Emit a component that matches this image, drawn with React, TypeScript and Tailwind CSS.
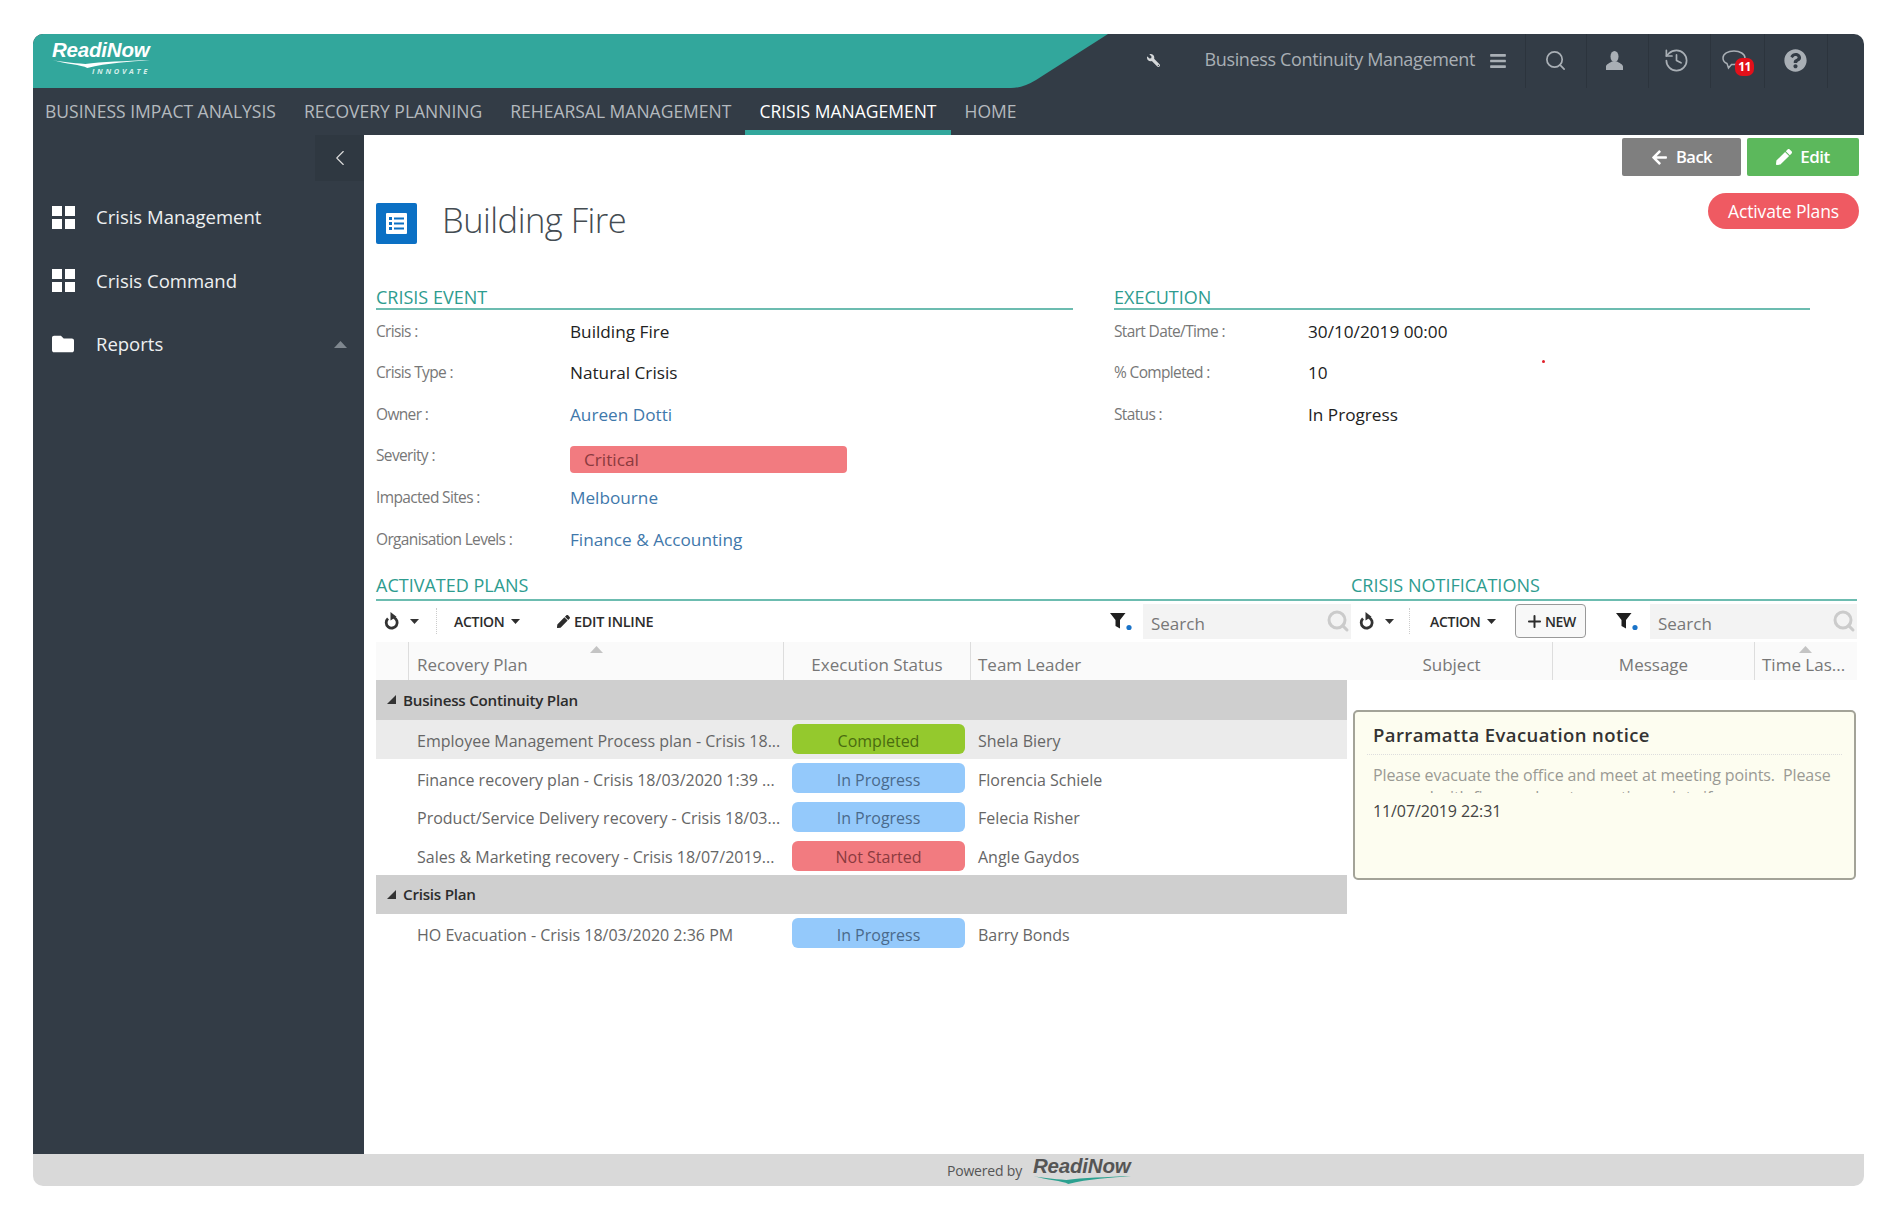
import { ChevronLeft, History, Plus, Search } from "lucide-react";
import { FaArrowLeft, FaBars, FaFolder, FaPen, FaQuestionCircle, FaWrench } from "react-icons/fa";

const font = "font-['Open_Sans','Liberation_Sans',sans-serif]";

function GridIcon() {
  return (
    <svg width="23" height="23" viewBox="0 0 23 23" fill="#fff" className="shrink-0">
      <rect x="0" y="0" width="10" height="10" />
      <rect x="13" y="0" width="10" height="10" />
      <rect x="0" y="13" width="10" height="10" />
      <rect x="13" y="13" width="10" height="10" />
    </svg>
  );
}

function Caret({ className = "" }: { className?: string }) {
  return (
    <svg width="9" height="5" viewBox="0 0 9 5" className={className} fill="currentColor">
      <path d="M0 0h9L4.5 5z" />
    </svg>
  );
}

function UpCaret({ className = "" }: { className?: string }) {
  return (
    <svg width="13" height="7" viewBox="0 0 13 7" className={className} fill="currentColor">
      <path d="M0 7h13L6.500 0z" />
    </svg>
  );
}

function FilterIcon() {
  return (
    <svg width="22" height="20" viewBox="0 0 22 20" className="shrink-0">
      <path d="M0 2h15.500L10 9v8.500l-4.500-2.500V9z" fill="#1f1f1f" />
      <circle cx="19" cy="16.500" r="2.600" fill="#1a73c8" />
    </svg>
  );
}

function RefreshIcon() {
  return (
    <svg width="16" height="18" viewBox="0 0 16 18" className="shrink-0">
      <path d="M9.800 5.500A5.500 5.500 0 1 1 4 6.500" fill="none" stroke="#333" strokeWidth="2.800" />
      <path d="M6.500 0l6 4.800-6 3.700z" fill="#333" />
    </svg>
  );
}

function UserIcon() {
  return (
    <svg width="17" height="19" viewBox="0 0 17 19" fill="currentColor">
      <ellipse cx="8.500" cy="5.500" rx="4" ry="5.500" />
      <path d="M0 19v-3.500C0 13 4 12 6 10.500h5C13 12 17 13 17 15.500V19z" />
    </svg>
  );
}

function ChatIcon() {
  return (
    <svg width="24" height="20" viewBox="0 0 24 20" fill="none" stroke="currentColor" strokeWidth="1.500">
      <path d="M12 1C6 1 1 3.500 1 8c0 2.500 1.500 4.500 4 5.500L6.500 18l3-3.500H12c6 0 11-2.500 11-6.500S18 1 12 1z" />
    </svg>
  );
}

function Logo({ dark }: { dark?: boolean }) {
  return (
    <div className="flex flex-col items-start">
      <span
        className={`font-['Liberation_Sans',sans-serif] text-[20.500px] leading-[22px] font-bold italic tracking-[-0.2px] ${
          dark ? "text-[#555]" : "text-white"
        }`}
      >
        ReadiNow
      </span>
      <svg width="98" height="9" viewBox="0 0 100 9" className="-mt-[1px]">
        <path d="M0 0C14 4 30 5 36 8C56 3 80 2 100 0C76 1 50 2 34 4C20 3 10 2 0 0z" fill={dark ? "#2ba08f" : "#fff"} />
      </svg>
    </div>
  );
}

function Section({ title }: { title: string }) {
  return (
    <div className="h-[26px] border-b-2 border-[#6cbcb0] text-[18px] leading-[27px] text-[#2e9c8f] uppercase">
      {title}
    </div>
  );
}

function Field({ label, children }: { label: string; children: React.ReactNode }) {
  return (
    <div className="flex h-[41.6px] items-center">
      <div className="-mt-[1px] w-[194px] text-[15.500px] tracking-[-0.65px] text-[#777]">{label} :</div>
      <div className="flex-1 text-[17.200px] text-[#222]">{children}</div>
    </div>
  );
}

function Link({ children }: { children: React.ReactNode }) {
  return <span className="text-[#3f78ab]">{children}</span>;
}

const badgeColors: Record<string, string> = {
  Completed: "bg-[#94c92d] text-[#4a6b10]",
  "In Progress": "bg-[#94c9fb] text-[#4a6a8c]",
  "Not Started": "bg-[#f27b80] text-[#8a3a3e]",
};

function PlanRow({
  name,
  status,
  leader,
  selected,
}: {
  name: string;
  status: string;
  leader: string;
  selected?: boolean;
}) {
  return (
    <div className={`flex h-[38.75px] items-center text-[16px] text-[#666] ${selected ? "bg-[#ebebeb]" : ""}`}>
      <div className="w-[402px] pt-[3px] pl-[41px] whitespace-nowrap">{name}</div>
      <div className="pl-[14px]">
        <div className={`flex h-[30px] w-[173px] items-center justify-center rounded-[6px] pt-[3px] ${badgeColors[status]}`}>
          {status}
        </div>
      </div>
      <div className="pt-[3px] pl-[13px]">{leader}</div>
    </div>
  );
}

function GroupRow({ title, className = "" }: { title: string; className?: string }) {
  return (
    <div className={`flex items-center gap-[7px] bg-[#cfcfcf] pl-[11px] text-[15.200px] font-semibold tracking-[-0.25px] text-[#2c2c2c] ${className}`}>
      <svg width="9" height="9" viewBox="0 0 9 9" fill="#333">
        <path d="M9 0v9H0z" />
      </svg>
      {title}
    </div>
  );
}

function SearchBox({ className = "" }: { className?: string }) {
  return (
    <div className={`flex h-[35px] items-center justify-between bg-[#f3f3f3] pr-[1px] pl-[8px] text-[17px] text-[#777] ${className}`}>
      <span className="pt-[4px]">Search</span>
      <Search size={24} strokeWidth={3} className="text-[#cbcbcb]" />
    </div>
  );
}

function Refresh() {
  return (
    <div className="flex items-center gap-[10px] text-[#333]">
      <RefreshIcon />
      <Caret />
    </div>
  );
}

function ActionMenu() {
  return (
    <div className="flex items-center gap-[6px] text-[14px] font-semibold tracking-[-0.3px] text-[#2c2c2c]">
      ACTION
      <Caret />
    </div>
  );
}

const tabs = ["BUSINESS IMPACT ANALYSIS", "RECOVERY PLANNING", "REHEARSAL MANAGEMENT", "CRISIS MANAGEMENT", "HOME"];

export default function App() {
  return (
    <div className={`relative h-[1222px] bg-white pt-[34px] pr-[39px] pl-[33px] ${font}`}>
      <div className="flex h-[1152px] flex-col overflow-hidden rounded-[10px] bg-white">
        {/* top bars */}
        <div className="relative h-[54px] shrink-0 bg-[#333c46]">
          <svg className="absolute top-0 left-0" width="1080" height="54" viewBox="0 0 1080 54">
            <path d="M0 0H1075L1003 46Q990 54 978 54H0z" fill="#32a79c" />
          </svg>
          <div className="absolute top-[5px] left-[19px]">
            <Logo />
            <div className="-mt-[2px] pl-[40px] text-[7.500px] leading-[8px] font-bold tracking-[2.700px] text-[#d5eeea] italic">INNOVATE</div>
          </div>
          <div className="absolute inset-y-0 right-0 flex items-center text-[#a9afb5]">
            <FaWrench size={13} className="mr-[44px] -mt-[2px] -scale-x-100 text-[#d5d8da]" />
            <span className="mr-[14px] -mt-[4px] text-[18px] tracking-[-0.35px]">Business Continuity Management</span>
            <FaBars size={18} className="mr-[18px]" />
            <div className="flex h-full w-[61px] items-center justify-center border-l border-[#2c343d] pr-[2px] pb-[2px]">
              <Search size={23} strokeWidth={1.800} />
            </div>
            <div className="flex h-full w-[62px] items-center justify-center border-l border-[#2c343d] pr-[6px] pb-[2px]">
              <UserIcon />
            </div>
            <div className="flex h-full w-[62px] items-center justify-center border-l border-[#2c343d] pr-[6px] pb-[2px]">
              <History size={27} strokeWidth={1.500} />
            </div>
            <div className="relative flex h-full w-[54px] items-center justify-center border-l border-[#2c343d] pr-[7px] pb-[2px]">
              <ChatIcon />
              <span className="absolute top-[24px] left-[24px] flex h-[18px] w-[19px] items-center justify-center rounded-[7px] bg-[#e2101a] text-[12px] font-bold tracking-[-0.5px] text-white">
                11
              </span>
            </div>
            <div className="flex h-full w-[64px] items-center justify-center border-x border-[#2c343d] pr-[2px] pb-[2px]">
              <FaQuestionCircle size={23} />
            </div>
            <div className="w-[36px]" />
          </div>
        </div>
        <div className="flex h-[47px] shrink-0 items-stretch bg-[#333c46]">
          {tabs.map((t) => (
            <div
              key={t}
              className={`flex items-center border-b-[5px] pt-[5px] pr-[14px] text-[17.500px] ${
                t === "CRISIS MANAGEMENT" ? "border-[#32a79c] text-white" : "border-transparent text-[#b4b9be]"
              } ${t === "BUSINESS IMPACT ANALYSIS" ? "pl-[12px]" : "pl-[14px]"}`}
            >
              {t}
            </div>
          ))}
        </div>

        <div className="flex min-h-0 flex-1">
          {/* sidebar */}
          <aside className="w-[331px] shrink-0 bg-[#333c46] text-white">
            <div className="flex justify-end">
              <div className="flex h-[46px] w-[49px] items-center justify-center bg-[#2f3841] text-[#ddd]">
                <ChevronLeft size={26} strokeWidth={1} />
              </div>
            </div>
            <div className="flex flex-col pt-[4px] pl-[19px] text-[18.500px] text-[#eef0f1]">
              <div className="flex h-[64px] items-center gap-[21px]">
                <GridIcon />
                Crisis Management
              </div>
              <div className="flex h-[63px] items-center gap-[21px]">
                <GridIcon />
                Crisis Command
              </div>
              <div className="flex h-[64px] items-center gap-[22px] pr-[17px]">
                <FaFolder size={22} className="shrink-0 text-white" />
                <span className="flex-1">Reports</span>
                <UpCaret className="text-[#7f878f]" />
              </div>
            </div>
          </aside>

          {/* main */}
          <main className="flex min-w-0 flex-1 flex-col pr-[5px] pl-[12px]">
            <div className="flex justify-end gap-[6px] pt-[3px]">
              <div className="flex h-[38px] w-[119px] items-center justify-center gap-[8px] rounded-[2px] bg-[#7f7f7f] text-[16.500px] font-semibold tracking-[-0.5px] text-white">
                <FaArrowLeft size={17} />
                Back
              </div>
              <div className="flex h-[38px] w-[112px] items-center justify-center gap-[8px] rounded-[2px] bg-[#5cb85c] text-[17px] font-semibold tracking-[-0.5px] text-white">
                <FaPen size={16} />
                Edit
              </div>
            </div>

            <div className="mt-[17px] flex h-[91px] items-start justify-between">
              <div className="mt-[10px] flex items-start gap-[25px]">
                <div className="flex h-[41px] w-[41px] items-center justify-center rounded-[2px] bg-[#0b70c4]">
                  <svg width="21" height="21" viewBox="0 0 21 21">
                    <rect width="21" height="21" rx="1" fill="#fff" />
                    <g fill="#0b70c4">
                      <rect x="3" y="4" width="3" height="3" />
                      <rect x="8" y="4.500" width="10" height="2" />
                      <rect x="3" y="9" width="3" height="3" />
                      <rect x="8" y="9.500" width="10" height="2" />
                      <rect x="3" y="14" width="3" height="3" />
                      <rect x="8" y="14.500" width="10" height="2" />
                    </g>
                  </svg>
                </div>
                <h1 className="-mt-[4px] text-[34.500px] leading-[41px] font-light tracking-[-0.5px] text-[#444c52]">Building Fire</h1>
              </div>
              <div className="flex h-[36px] w-[151px] items-center justify-center rounded-full bg-[#ef5a62] text-[17.500px] tracking-[-0.15px] text-white">
                Activate Plans
              </div>
            </div>

            <div className="flex gap-[41px]">
              <div className="w-[697px]">
                <Section title="Crisis Event" />
                <div className="pt-[1px]">
                  <Field label="Crisis">Building Fire</Field>
                  <Field label="Crisis Type">Natural Crisis</Field>
                  <Field label="Owner">
                    <Link>Aureen Dotti</Link>
                  </Field>
                  <Field label="Severity">
                    <div className="mt-[6px] flex h-[27px] w-[277px] items-center rounded-[4px] bg-[#f27b80] pl-[14px] text-[#8a3a3e]">Critical</div>
                  </Field>
                  <Field label="Impacted Sites">
                    <Link>Melbourne</Link>
                  </Field>
                  <Field label="Organisation Levels">
                    <Link>Finance &amp; Accounting</Link>
                  </Field>
                </div>
              </div>
              <div className="w-[696px]">
                <Section title="Execution" />
                <div className="pt-[1px]">
                  <Field label="Start Date/Time">30/10/2019 00:00</Field>
                  <Field label="% Completed">10</Field>
                  <Field label="Status">In Progress</Field>
                </div>
              </div>
            </div>

            <div className="mt-[11px] mr-[2px] border-b-2 border-[#6cbcb0]">
              <div className="flex h-[27px] text-[18px] leading-[26px] text-[#2e9c8f]">
                <div className="w-[975px]">ACTIVATED PLANS</div>
                <div>CRISIS NOTIFICATIONS</div>
              </div>
            </div>

            <div className="mr-[2px] flex">
              {/* plans panel */}
              <div className="w-[975px] shrink-0">
                <div className="mt-[3.400px] flex h-[35px] items-center">
                  <div className="w-[60px] pl-[8px]">
                    <Refresh />
                  </div>
                  <div className="h-[26px] border-l border-dotted border-[#ccc]" />
                  <div className="ml-[17px] w-[103px]">
                    <ActionMenu />
                  </div>
                  <div className="flex items-center gap-[4px] text-[14.500px] font-semibold tracking-[-0.3px] text-[#2c2c2c]">
                    <FaPen size={13} />
                    EDIT INLINE
                  </div>
                  <div className="ml-auto flex items-center gap-[11px]">
                    <FilterIcon />
                    <SearchBox className="w-[208px]" />
                  </div>
                </div>
                <div className="mt-[3px] flex h-[38px] items-stretch bg-[#fafafa] text-[17px] text-[#777]">
                  <div className="w-[33px] border-r border-[#ddd]" />
                  <div className="relative w-[375px] border-r border-[#ddd] pt-[10px] pl-[8px]">
                    Recovery Plan
                    <UpCaret className="absolute top-[4px] left-[181px] text-[#c4c4c4]" />
                  </div>
                  <div className="w-[187px] border-r border-[#ddd] pt-[10px] text-center">Execution Status</div>
                  <div className="pt-[10px] pl-[7px]">Team Leader</div>
                </div>
                <div className="w-[971px]">
                  <GroupRow title="Business Continuity Plan" className="h-[40px]" />
                  <PlanRow selected name="Employee Management Process plan - Crisis 18..." status="Completed" leader="Shela Biery" />
                  <PlanRow name="Finance recovery plan - Crisis 18/03/2020 1:39 ..." status="In Progress" leader="Florencia Schiele" />
                  <PlanRow name="Product/Service Delivery recovery - Crisis 18/03..." status="In Progress" leader="Felecia Risher" />
                  <PlanRow name="Sales &amp; Marketing recovery - Crisis 18/07/2019..." status="Not Started" leader="Angle Gaydos" />
                  <GroupRow title="Crisis Plan" className="h-[39px]" />
                  <PlanRow name="HO Evacuation - Crisis 18/03/2020 2:36 PM" status="In Progress" leader="Barry Bonds" />
                </div>
              </div>

              {/* notifications panel */}
              <div className="min-w-0 flex-1">
                <div className="mt-[3.400px] flex h-[35px] items-center">
                  <div className="w-[58px] pl-[8px]">
                    <Refresh />
                  </div>
                  <div className="h-[26px] border-l border-dotted border-[#ccc]" />
                  <div className="ml-[20px] w-[85px]">
                    <ActionMenu />
                  </div>
                  <div className="flex h-[34px] w-[71px] items-center justify-center gap-[1px] rounded-[4px] border border-[#999] bg-[#f8f8f8] text-[14px] font-semibold tracking-[-0.3px] text-[#2c2c2c]">
                    <Plus size={19} strokeWidth={2.500} />
                    NEW
                  </div>
                  <div className="ml-auto flex items-center gap-[12px]">
                    <FilterIcon />
                    <SearchBox className="w-[207px]" />
                  </div>
                </div>
                <div className="mt-[3px] flex h-[38px] items-stretch bg-[#fafafa] text-[17px] text-[#777]">
                  <div className="w-[202px] border-r border-[#ddd] pt-[10px] text-center">Subject</div>
                  <div className="w-[202px] border-r border-[#ddd] pt-[10px] text-center">Message</div>
                  <div className="relative min-w-0 flex-1 pt-[10px] pl-[7px] whitespace-nowrap">
                    Time Las...
                    <UpCaret className="absolute top-[4px] left-[44px] text-[#c4c4c4]" />
                  </div>
                </div>
                <div className="mt-[30px] ml-[2px] h-[170px] w-[503px] overflow-hidden rounded-[5px] border-2 border-[#a3a398] bg-[#fdfdf0] px-[18px] pt-[11px]">
                  <div className="text-[18.500px] leading-[24px] font-semibold tracking-[0.4px] text-[#333]">Parramatta Evacuation notice</div>
                  <div className="-mx-[6px] mt-[7px] border-t border-dotted border-[#ddd]" />
                  <div className="mt-[9px] h-[29px] overflow-hidden text-[16px] leading-[22px] tracking-[-0.1px] text-[#9a9a94]">
                    Please evacuate the office and meet at meeting points.&nbsp; Please proceed with fire wardens to meeting points if you are affected.
                  </div>
                  <div className="mt-[8px] text-[16px] leading-[20px] tracking-[-0.1px] text-[#444]">11/07/2019 22:31</div>
                </div>
              </div>
            </div>
          </main>
        </div>

        {/* footer */}
        <div className="flex h-[32px] shrink-0 items-center justify-center gap-[11px] bg-[#d9d9d9] pl-[181px] text-[14px] tracking-[-0.2px] text-[#555]">
          Powered by
          <Logo dark />
        </div>
      </div>
      {/* stray red dot from the capture */}
      <div className="absolute top-[360px] left-[1542px] h-[3px] w-[3px] rounded-full bg-[#e0202a]" />
    </div>
  );
}
